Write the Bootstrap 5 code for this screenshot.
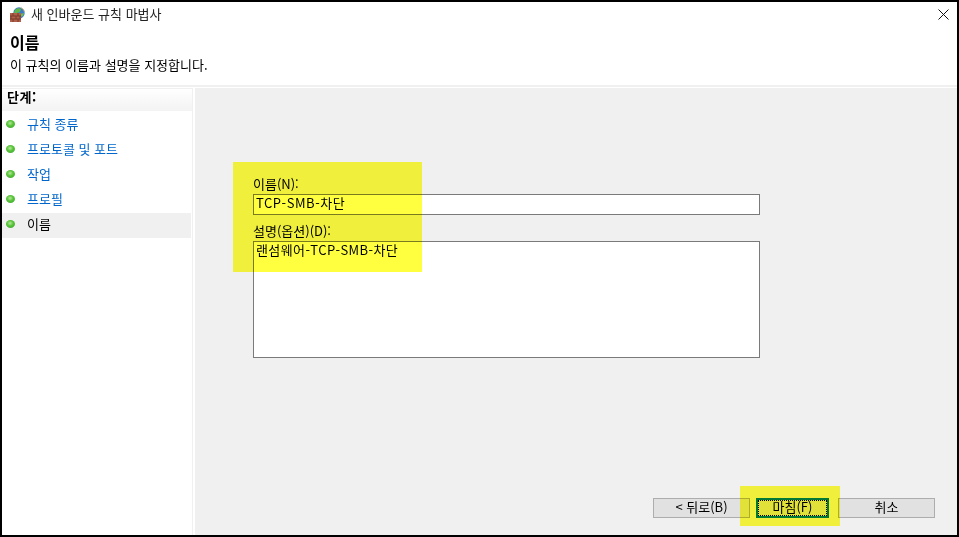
<!DOCTYPE html>
<html lang="ko">
<head>
<meta charset="utf-8">
<title>새 인바운드 규칙 마법사</title>
<link href="https://cdn.jsdelivr.net/npm/bootstrap@5.3.0/dist/css/bootstrap.min.css" rel="stylesheet">
<style>
html,body{height:100%;background:#000;overflow:hidden}
body{font-family:"Noto Sans CJK KR","Liberation Sans",sans-serif;font-size:13px;line-height:16px;color:#000;padding:2px}
.dlg{position:relative;width:955px;height:533px;background:#fff}
.titlebar{height:25px;padding:0 8px 0 8px;color:#222}
.titlebar .ttl{margin-left:5px;margin-top:-2px}
.titlebar .xbtn{margin-top:-1px}
.hdr{height:60px;padding:5px 0 0 8px;border-bottom:2px solid #f0f0f0}
.hdr h1{font-size:16px;line-height:20px;font-weight:700;margin:0 0 5px}
.hdr p{margin:0}
.mainrow{height:447px;margin-top:1px}
.side{width:191px;border-right:1px solid #f0f0f0}
.side-h{height:23px;padding:0 0 0 5px;font-weight:700;background:linear-gradient(#fff,#f3f3f3);border-top:1px solid #f0f0f0;letter-spacing:.6px}
.list-group{margin-top:2px}
.list-group .stp{height:25px;padding:0 0 3px 4px;border:0;border-radius:0;background:transparent;color:#0066cc;width:189px}
.list-group .stp.cur{background:#f0f0f0;color:#000}
.stp svg{margin-right:12px;flex:none}
.gap{width:2px}
.pane{background:#f0f0f0;padding:88px 0 17px 58px}
.lbl{display:block;margin:0 0 2px;height:16px}
.fld{width:507px;border:1px solid #7a7a7a;border-radius:0;background:#fff;padding:0 2px;font-size:13px;line-height:16px;color:#000;letter-spacing:.4px;box-shadow:none;outline:0}
.fld1{height:21px;margin-bottom:8px;padding-bottom:4px;letter-spacing:.55px}
.fld2{height:117px;resize:none;display:block}
.btnrow{margin-left:400px;margin-top:auto;gap:6px}
.wbtn{height:20px;padding:0 0 2px;border:1px solid #adadad;border-radius:0;background:#e1e1e1;font-size:13px;line-height:14px;color:#000}
.b1{width:97px}
.wbtn.b2{width:73px;border:2px solid #0078d7;outline:1px dotted #000;outline-offset:-3px}
.b3{width:97px;margin-left:3px}
.hl{position:absolute;background:#ffff40;mix-blend-mode:multiply;pointer-events:none}
.hl1{left:231px;top:160px;width:189px;height:110px}
.hl2{left:738px;top:484px;width:100px;height:40px}
</style>
</head>
<body>
<div class="dlg d-flex flex-column">
  <div class="titlebar d-flex align-items-center">
    <svg width="16" height="16" viewBox="0 0 16 16">
      <circle cx="9" cy="6" r="5.7" fill="#3a78c9"/>
      <path d="M5 3c2-2 5-2 6-1l-1 3-3 1-1 2-2-2z" fill="#5fb84a"/>
      <path d="M10 7l4-1-1 3-3 1z" fill="#6cbc4e"/>
      <path d="M11 .8c2 1 3 2.5 3.3 4" stroke="#d9a83a" stroke-width="1" fill="none"/>
      <rect x="0" y="6" width="11" height="9" fill="#b0604a"/>
      <path d="M0 9h11M0 12h11M3 6v3M8 6v3M1 9v3M6 9v3M10 9v3M3 12v3M8 12v3" stroke="#7a3a2a" stroke-width="1"/>
    </svg>
    <span class="ttl">새 인바운드 규칙 마법사</span>
    <svg class="xbtn ms-auto" width="11" height="11" viewBox="0 0 11 11"><path d="M.5.5l10 10M10.5.5l-10 10" stroke="#111" stroke-width="1"/></svg>
  </div>
  <div class="hdr">
    <h1>이름</h1>
    <p>이 규칙의 이름과 설명을 지정합니다.</p>
  </div>
  <div class="mainrow d-flex">
    <div class="side">
      <div class="side-h">단계:</div>
      <div class="list-group">
        <div class="list-group-item stp d-flex align-items-center"><svg width="9" height="8"><use href="#dot"/></svg>규칙 종류</div>
        <div class="list-group-item stp d-flex align-items-center"><svg width="9" height="8"><use href="#dot"/></svg>프로토콜 및 포트</div>
        <div class="list-group-item stp d-flex align-items-center"><svg width="9" height="8"><use href="#dot"/></svg>작업</div>
        <div class="list-group-item stp d-flex align-items-center"><svg width="9" height="8"><use href="#dot"/></svg>프로필</div>
        <div class="list-group-item stp cur d-flex align-items-center"><svg width="9" height="8"><use href="#dot"/></svg>이름</div>
      </div>
    </div>
    <div class="gap"></div>
    <div class="pane flex-grow-1 d-flex flex-column">
      <label class="lbl" for="n">이름(N):</label>
      <input id="n" class="fld fld1" value="TCP-SMB-차단">
      <label class="lbl" for="d">설명(옵션)(D):</label>
      <textarea id="d" class="fld fld2">랜섬웨어-TCP-SMB-차단</textarea>
      <div class="btnrow d-flex">
        <button class="btn wbtn b1">&lt; 뒤로(B)</button>
        <button class="btn wbtn b2">마침(F)</button>
        <button class="btn wbtn b3">취소</button>
      </div>
    </div>
  </div>
  <div class="hl hl1"></div>
  <div class="hl hl2"></div>
</div>
<svg width="0" height="0" class="d-block">
  <defs>
    <radialGradient id="g" cx=".45" cy=".4" r=".7"><stop offset="0" stop-color="#b5e89a"/><stop offset=".5" stop-color="#55c336"/><stop offset="1" stop-color="#45a83a"/></radialGradient>
    <symbol id="dot" viewBox="0 0 9 8"><ellipse cx="4.5" cy="4" rx="4.5" ry="4" fill="url(#g)"/></symbol>
  </defs>
</svg>
<script src="https://cdn.jsdelivr.net/npm/bootstrap@5.3.0/dist/js/bootstrap.bundle.min.js"></script>
</body>
</html>
